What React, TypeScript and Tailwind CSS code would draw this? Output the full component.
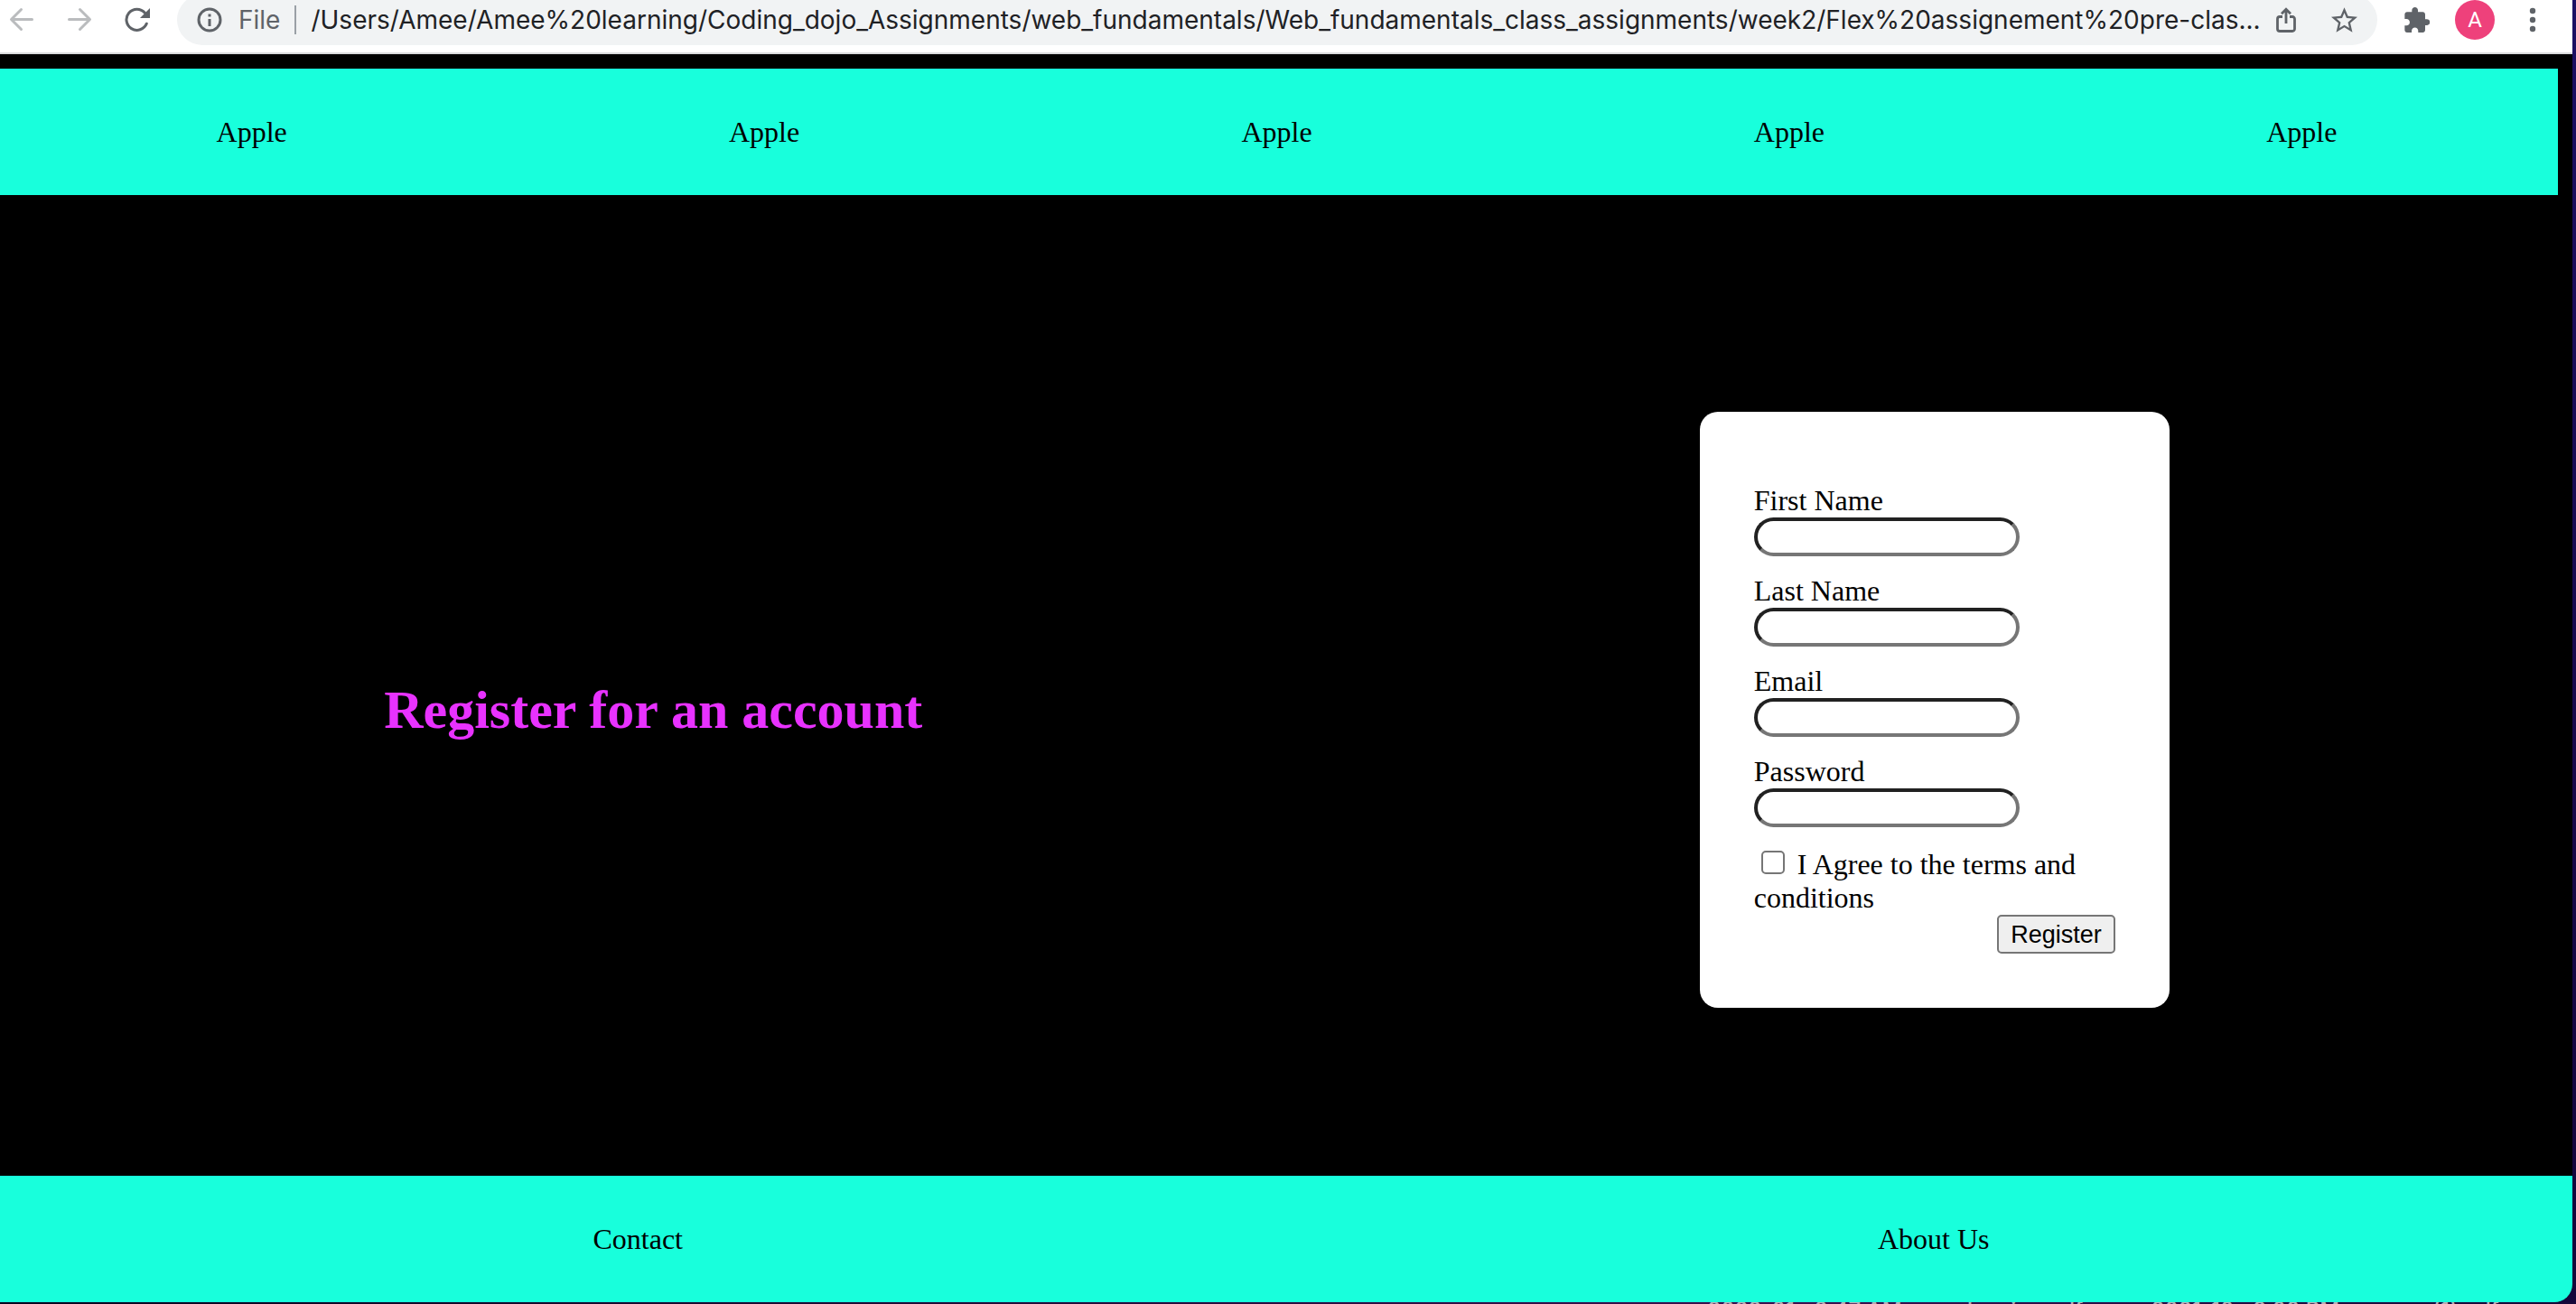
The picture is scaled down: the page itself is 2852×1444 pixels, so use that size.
import React from "react";

const navLinks = ["Apple", "Apple", "Apple", "Apple", "Apple"];

const fields = [
  { id: "first-name", label: "First Name", type: "text" },
  { id: "last-name", label: "Last Name", type: "text" },
  { id: "email", label: "Email", type: "email" },
  { id: "password", label: "Password", type: "password" },
];

const pageUrl =
  "/Users/Amee/Amee%20learning/Coding_dojo_Assignments/web_fundamentals/Web_fundamentals_class_assignments/week2/Flex%20assignement%20pre-clas...";

const desktopFiles = ["2022-01...2.47 AM", "Invoice.pdf", "2021-10...9.00 PM", "(1).pdf"];

function BackIcon() {
  return (
    <svg viewBox="0 0 28 28" className="size-7" fill="none" stroke="#babcbe" strokeWidth="3" strokeLinecap="round" strokeLinejoin="round">
      <path d="M25.5 13.5H3M13.5 2.5L2.5 13.5L13.5 24.5" />
    </svg>
  );
}

function ForwardIcon() {
  return (
    <svg viewBox="0 0 28 28" className="size-7" fill="none" stroke="#babcbe" strokeWidth="3" strokeLinecap="round" strokeLinejoin="round">
      <path d="M2.5 13.5H25M14.5 2.5L25.5 13.5L14.5 24.5" />
    </svg>
  );
}

function ReloadIcon() {
  return (
    <svg viewBox="0 0 28 28" className="size-7">
      <path d="M24.3 18.2A11.6 11.6 0 1 1 22.4 6.2" fill="none" stroke="#5f6368" strokeWidth="3" strokeLinecap="round" />
      <path d="M28 1V12H17Z" fill="#5f6368" />
    </svg>
  );
}

function InfoIcon() {
  return (
    <svg viewBox="0 0 28 28" className="size-7 shrink-0">
      <circle cx="14" cy="14" r="12" fill="none" stroke="#5f6368" strokeWidth="3" />
      <path d="M12.5 7.5h3v3h-3zM12.5 13h3v8h-3z" fill="#5f6368" />
    </svg>
  );
}

function ShareIcon() {
  return (
    <svg viewBox="0 0 28 28" className="size-7" fill="none" stroke="#5f6368" strokeWidth="2.8">
      <path d="M10 10.500H7a2.500 2.500 0 0 0-2.500 2.500V24a2.500 2.500 0 0 0 2.500 2.500H21a2.500 2.500 0 0 0 2.500-2.500V13a2.500 2.500 0 0 0-2.500-2.500H18" />
      <path d="M14 18V2.500M9 7.200L14 2.200L19 7.200" />
    </svg>
  );
}

function StarIcon() {
  return (
    <svg viewBox="2 2 20 19" className="h-7 w-[29px]" fill="#5f6368">
      <path d="M22 9.240l-7.190-.62L12 2 9.190 8.630 2 9.240l5.460 4.730L5.820 21 12 17.270 18.180 21l-1.630-7.030L22 9.240zM12 15.400l-3.760 2.270 1-4.280-3.320-2.880 4.380-.38L12 6.100l1.710 4.040 4.380.38-3.320 2.880 1 4.280L12 15.400z" />
    </svg>
  );
}

function ExtensionsIcon() {
  return (
    <svg viewBox="2 1 20.500 21" className="size-7" fill="#5f6368">
      <path d="M20.500 11H19V7c0-1.100-.9-2-2-2h-4V3.500C13 2.120 11.880 1 10.500 1S8 2.120 8 3.500V5H4c-1.100 0-1.990.9-1.990 2v3.800H3.500c1.490 0 2.700 1.210 2.700 2.700s-1.210 2.700-2.700 2.700H2V20c0 1.100.9 2 2 2h3.800v-1.500c0-1.490 1.210-2.700 2.700-2.700 1.490 0 2.700 1.210 2.700 2.700V22H17c1.100 0 2-.9 2-2v-4h1.500c1.380 0 2.500-1.120 2.500-2.500S21.880 11 20.500 11z" />
    </svg>
  );
}

function MenuIcon() {
  return (
    <svg viewBox="0 0 28 28" className="size-7" fill="#5f6368">
      <circle cx="14" cy="4" r="3.200" />
      <circle cx="14" cy="14" r="3.200" />
      <circle cx="14" cy="24" r="3.200" />
    </svg>
  );
}

function BrowserToolbar() {
  return (
    <header className="h-[60px] border-b-2 border-[#dadbdd] bg-white">
      <div className="flex h-11 items-center pr-[30px] pl-[10px]">
        <div className="flex gap-9">
          <button type="button" aria-label="Back"><BackIcon /></button>
          <button type="button" aria-label="Forward"><ForwardIcon /></button>
          <button type="button" aria-label="Reload"><ReloadIcon /></button>
        </div>
        <div className="ml-[30px] flex h-14 min-w-0 flex-1 items-center rounded-full bg-[#f1f3f4] px-[22px] font-['Inter',sans-serif] text-[28px] leading-8">
          <InfoIcon />
          <label htmlFor="address" className="ml-[18px] text-[#5f6368]">File</label>
          <span className="ml-4 h-8 w-[2px] shrink-0 bg-[#9aa0a6]" />
          <input id="address" type="text" defaultValue={pageUrl} className="ml-4 h-8 min-w-0 flex-1 bg-transparent text-[#202124] outline-none" />
          <div className="ml-2 flex gap-9">
            <button type="button" aria-label="Share"><ShareIcon /></button>
            <button type="button" aria-label="Bookmark"><StarIcon /></button>
          </div>
        </div>
        <button type="button" aria-label="Extensions" className="ml-[30px]"><ExtensionsIcon /></button>
        <button type="button" className="ml-7 size-11 rounded-full bg-[#ee417b] font-['Roboto',sans-serif] text-2xl text-white">A</button>
        <button type="button" aria-label="Menu" className="ml-7"><MenuIcon /></button>
      </div>
    </header>
  );
}

function RegisterForm() {
  return (
    <form className="flex w-[520px] flex-col rounded-[20px] bg-white p-[60px]">
      <div className="flex flex-col gap-5 pt-5">
        {fields.map((field) => (
          <div key={field.id} className="flex flex-col items-start">
            <label htmlFor={field.id}>{field.label}</label>
            <input
              id={field.id}
              type={field.type}
              className="h-[43px] w-[294px] rounded-full border-4 border-t-[#212121] border-r-[#767676] border-b-[#767676] border-l-[#212121] bg-white px-2 outline-none"
            />
          </div>
        ))}
      </div>
      <div className="mt-[23px]">
        <input
          id="terms"
          type="checkbox"
          className="mr-[6px] ml-2 size-[26px] appearance-none rounded-[5px] border-2 border-[#767676] bg-white"
        />{" "}
        <label htmlFor="terms">I Agree to the terms and conditions</label>
      </div>
      <button
        type="submit"
        className="h-[43px] self-end rounded-[5px] border-2 border-[#767676] bg-[#efefef] px-[13px] font-['Liberation_Sans',sans-serif] text-[27px] leading-8"
      >
        Register
      </button>
    </form>
  );
}

/* Sliver of the desktop that shows under the browser window. */
function DesktopStrip() {
  return (
    <div className="flex h-[2px] justify-end overflow-hidden bg-linear-to-r from-[#07051f] via-[#3d1050] via-70% to-[#160838] font-['Inter',sans-serif] text-2xl leading-[18px] font-medium text-[#b9adb8]">
      {desktopFiles.map((name) => (
        <span key={name} className="w-[244px] text-center">{name}</span>
      ))}
    </div>
  );
}

export default function App() {
  return (
    <div className="flex min-h-screen flex-col bg-linear-to-b from-[#1c1064] to-[#14063a]">
      <div className="flex flex-1 flex-col pr-1">
        <div className="flex flex-1 flex-col overflow-hidden rounded-br-[20px] bg-black font-['Liberation_Serif',serif] text-[32px] leading-[37px] text-black">
          <BrowserToolbar />
          <div className="-ml-[5px] flex flex-1 flex-col pt-4">
            <nav className="mr-4 flex h-[140px] items-center justify-around bg-[#18ffdc]">
              {navLinks.map((text, index) => (
                <a key={index} href="#top">{text}</a>
              ))}
            </nav>
            <main className="mr-4 flex flex-1 items-center justify-around pt-[54px]">
              <h1 className="text-[60px] leading-[74px] font-bold text-[#e832ff]">Register for an account</h1>
              <RegisterForm />
            </main>
            <footer className="-mr-4 flex h-[140px] items-center justify-around bg-[#18ffdc]">
              <a href="#contact">Contact</a>
              <a href="#about">About Us</a>
            </footer>
          </div>
        </div>
      </div>
      <DesktopStrip />
    </div>
  );
}
